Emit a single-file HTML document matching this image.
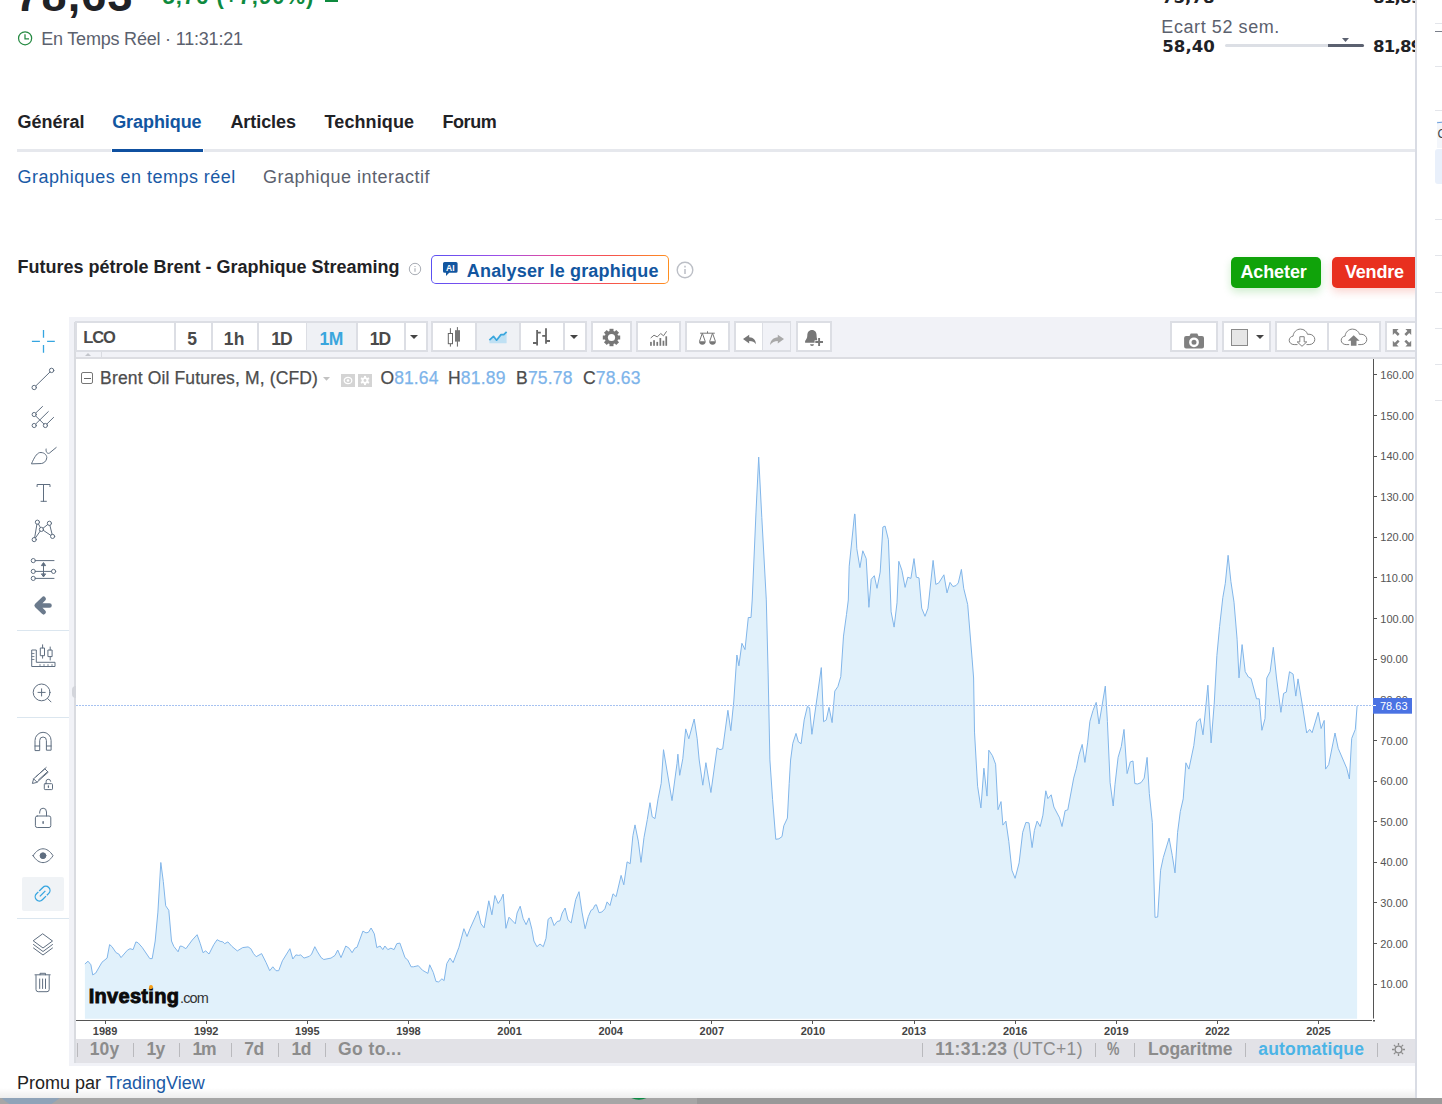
<!DOCTYPE html>
<html lang="fr">
<head>
<meta charset="utf-8">
<title>Futures pétrole Brent - Graphique Streaming</title>
<style>
html,body{margin:0;padding:0;overflow:hidden;}
body{width:1442px;height:1104px;overflow:hidden;background:#fff;position:relative;font-family:"Liberation Sans",Arial,sans-serif;color:#1f2226;}
.abs{position:absolute;white-space:nowrap;line-height:1;}
.lg{-webkit-text-stroke:0.25px currentColor;}
.t{position:absolute;white-space:nowrap;line-height:1;}
svg{position:absolute;overflow:visible;}
.yl{font:11px "Liberation Sans",sans-serif;fill:#555;}
.xl{font:bold 11px "Liberation Sans",sans-serif;fill:#444;}
.tb{position:absolute;top:322px;height:29px;box-sizing:border-box;border:1px solid #d9dbe0;background:#fff;}
.tb.act{background:#eff1f5;}
.tbt{position:absolute;white-space:nowrap;line-height:1;font-weight:bold;font-size:17.5px;color:#4a4a4a;}
.bb{position:absolute;white-space:nowrap;line-height:1;font-weight:bold;font-size:17.5px;color:#8c8c8c;}
.grp{position:absolute;top:321px;height:31px;box-sizing:border-box;border:2px solid #dcdee4;background:#fff;}
.dv{position:absolute;top:323px;height:27px;width:2px;background:#dcdee4;}
.act{position:absolute;top:323px;height:27px;background:#eff1f5;}
.sep{position:absolute;top:1043px;width:1px;height:14px;background:#b9b9bd;}
</style>
</head>
<body>

<!-- ===== top header (cropped) ===== -->
<div class="t" id="price" style="left:15.2px;top:-27px;font-size:45px;font-weight:bold;color:#1f2226;letter-spacing:1.2px;">78,63</div>
<div class="t" id="chg" style="left:162.5px;top:-13.8px;font-size:22px;font-weight:bold;color:#0e8a3e;letter-spacing:1px;">5,76 (+7,90%)</div>
<div class="abs" style="left:324.5px;top:0;width:13.5px;height:2px;background:#0e8a3e;"></div>
<svg style="left:17px;top:30px" width="17" height="17" viewBox="17 30 17 17"><circle cx="25.1" cy="38.3" r="6.55" fill="none" stroke="#258a42" stroke-width="1.25"/><path d="M25 34.300V38.800H29" fill="none" stroke="#258a42" stroke-width="1.25"/></svg>
<div class="t" id="rt" style="left:41.2px;top:29.8px;font-size:18px;color:#5b616e;letter-spacing:-0.2px;">En Temps Réel · 11:31:21</div>

<div class="t" id="v1" style="left:1162px;top:-10.2px;font-size:16.6px;font-weight:bold;letter-spacing:0px;font-family:'DejaVu Sans','Liberation Sans',sans-serif;">75,78</div>
<div class="t" id="v2" style="left:1373px;top:-10.2px;font-size:16.6px;font-weight:bold;letter-spacing:-0.8px;font-family:'DejaVu Sans','Liberation Sans',sans-serif;">81,89</div>
<div class="t" id="ec" style="left:1161.3px;top:17.9px;font-size:18px;color:#5b616e;letter-spacing:0.58px;">Ecart 52 sem.</div>
<div class="t" id="v3" style="left:1162.3px;top:39.3px;font-size:16.6px;font-weight:bold;letter-spacing:0px;font-family:'DejaVu Sans','Liberation Sans',sans-serif;">58,40</div>
<div class="t" id="v4" style="left:1373px;top:39.3px;font-size:16.6px;font-weight:bold;letter-spacing:-0.8px;font-family:'DejaVu Sans','Liberation Sans',sans-serif;">81,89</div>
<div class="abs" style="left:1225px;top:44px;width:139px;height:3px;background:#dcdfe5;border-radius:2px;"></div>
<div class="abs" style="left:1328px;top:44px;width:36px;height:3px;background:#5b6170;border-radius:0 2px 2px 0;"></div>
<svg style="left:1342px;top:38px" width="7" height="4" viewBox="0 0 7 4"><path d="M0 0h7L3.5 4z" fill="#5b6170"/></svg>

<!-- ===== tabs ===== -->
<div class="t tab" id="tab1" style="left:17.5px;top:113.1px;font-size:18px;font-weight:bold;letter-spacing:0px;">Général</div>
<div class="t tab" id="tab2" style="left:112.2px;top:113.1px;font-size:18px;font-weight:bold;color:#1256a0;letter-spacing:-0.08px;">Graphique</div>
<div class="t tab" id="tab3" style="left:230.4px;top:113.1px;font-size:18px;font-weight:bold;letter-spacing:-0.06px;">Articles</div>
<div class="t tab" id="tab4" style="left:324.5px;top:113.1px;font-size:18px;font-weight:bold;letter-spacing:0.11px;">Technique</div>
<div class="t tab" id="tab5" style="left:442.4px;top:113.1px;font-size:18px;font-weight:bold;letter-spacing:-0.4px;">Forum</div>
<div class="abs" style="left:17px;top:149px;width:1398px;height:3px;background:#e6e8ed;"></div>
<div class="abs" style="left:111px;top:149px;width:93px;height:3px;background:#fff;"></div><div class="abs" style="left:112px;top:149px;width:91px;height:3px;background:#0f50a0;"></div>

<div class="t" id="sub1" style="left:17.5px;top:167.8px;font-size:18px;color:#1a5aa6;letter-spacing:0.46px;">Graphiques en temps réel</div>
<div class="t" id="sub2" style="left:263.1px;top:167.8px;font-size:18px;color:#5b616e;letter-spacing:0.49px;">Graphique interactif</div>

<!-- ===== title row ===== -->
<div class="t" id="title" style="left:17.5px;top:257.8px;font-size:18px;font-weight:bold;">Futures pétrole Brent - Graphique Streaming</div>
<svg style="left:407.600px;top:261.900px" width="14" height="14" viewBox="0 0 14 14"><circle cx="7" cy="7" r="5.700" fill="none" stroke="#a9adb5" stroke-width="1"/><path d="M7 6.200v3.600M7 3.900v1.200" stroke="#a9adb5" stroke-width="1.100"/></svg>
<div class="abs" style="left:431px;top:255px;width:238px;height:29px;border-radius:5px;background:linear-gradient(90deg,#5a50f2 0%,#a04fe8 30%,#ee4a8c 55%,#f5524f 75%,#ff8f1f 100%);"></div>
<div class="abs" style="left:432.300px;top:256.300px;width:235.400px;height:26.400px;border-radius:3.800px;background:#fff;"></div>
<svg style="left:442.600px;top:262.300px" width="15" height="14" viewBox="0 0 15 14"><path d="M1.600 0h11.400a1.600 1.600 0 0 1 1.600 1.600v7.600a1.600 1.600 0 0 1-1.600 1.600H6.200L3 13.900V10.800H1.600A1.600 1.600 0 0 1 0 9.200V1.600A1.600 1.600 0 0 1 1.600 0z" fill="#1256a0"/><text x="7.300" y="8.600" text-anchor="middle" font-family="Liberation Sans,sans-serif" font-weight="bold" font-size="8.500" fill="#fff">AI</text></svg>
<div class="t" id="anal" style="left:466.8px;top:261.6px;font-size:18px;font-weight:bold;color:#1256a0;letter-spacing:0.18px;">Analyser le graphique</div>
<svg style="left:676px;top:260.500px" width="18" height="18" viewBox="0 0 18 18"><circle cx="9" cy="9" r="7.800" fill="none" stroke="#bcbfc6" stroke-width="1.400"/><path d="M9 8v5M9 4.800v1.600" stroke="#bcbfc6" stroke-width="1.500"/></svg>

<div class="abs" style="left:1231px;top:257px;width:90px;height:31px;border-radius:5px;background:#10a30a;box-shadow:0 4px 9px rgba(16,163,10,.2);"></div>
<div class="t" id="buy" style="left:1240.4px;top:262.9px;font-size:18px;font-weight:bold;color:#fff;letter-spacing:-0.1px;">Acheter</div>
<div class="abs" style="left:1332px;top:257px;width:100px;height:31px;border-radius:5px;background:#e8301f;box-shadow:0 4px 9px rgba(232,48,31,.2);"></div>
<div class="t" id="sell" style="left:1345px;top:262.9px;font-size:18px;font-weight:bold;color:#fff;letter-spacing:-0.2px;">Vendre</div>

<!-- ===== chart widget ===== -->
<div class="abs" id="wbg" style="left:69px;top:317px;width:1346px;height:749px;background:#f1f2f7;"></div>
<!-- chart white area -->
<div class="abs" style="left:75px;top:357px;width:1340px;height:683px;background:#fff;"></div>
<div class="abs" style="left:75px;top:356.500px;width:1340px;height:2px;background:#dcdde2;"></div>
<div class="abs" style="left:74px;top:322px;width:2px;height:741px;background:#d9dbe0;"></div>
<!-- bottom bar -->
<div class="abs" style="left:76px;top:1039px;width:1339px;height:23.5px;background:#e2e2e7;"></div>

<!-- top toolbar groups -->
<div class="grp" style="left:74.500px;width:353px;"></div>
<div class="dv" style="left:174px"></div><div class="dv" style="left:210.500px"></div><div class="dv" style="left:256.800px"></div><div class="dv" style="left:305.500px"></div><div class="dv" style="left:356px"></div><div class="dv" style="left:403.500px"></div>
<div class="act" style="left:307px;width:49px;"></div>
<div class="tbt" id="lco" style="left:83.3px;top:329px;font-size:16.5px;letter-spacing:-1.2px;">LCO</div>
<div class="tbt" id="b5" style="left:187.3px;top:330.7px;">5</div>
<div class="tbt" id="b1h" style="left:223.8px;top:330.7px;letter-spacing:0.2px;">1h</div>
<div class="tbt" id="b1d" style="left:271.2px;top:330.7px;letter-spacing:-0.8px;">1D</div>
<div class="tbt" id="b1m" style="left:319.5px;top:330.7px;color:#3aa6dd;letter-spacing:-0.5px;">1M</div>
<div class="tbt" id="b1d2" style="left:369.7px;top:330.7px;letter-spacing:-0.8px;">1D</div>
<svg style="left:410px;top:335px" width="8" height="4" viewBox="0 0 8 4"><path d="M0 0h8L4 4z" fill="#444"/></svg>
<!-- small strip below symbol input -->
<svg style="left:85px;top:352.500px" width="6" height="3" viewBox="0 0 6 3"><path d="M0 3h6L3 0z" fill="#c3c5cb"/></svg>
<div class="abs" style="left:100.500px;top:352px;width:1.500px;height:5px;background:#d9dbe1;"></div>

<div class="grp" style="left:431px;width:156px;"></div>
<div class="dv" style="left:475.300px"></div><div class="dv" style="left:519.200px"></div><div class="dv" style="left:563.200px"></div>
<div class="act" style="left:476.800px;width:42.400px;"></div>
<svg style="left:440px;top:322px" width="30" height="30" viewBox="440 322 30 30"><path d="M450.400 328.200V333.500M450.400 343.700V346.600M457.400 327.100V346.600" stroke="#666" stroke-width="1" fill="none"/><rect x="448.300" y="333.500" width="4.200" height="10.200" fill="#fff" stroke="#666" stroke-width="1"/><rect x="455" y="330.200" width="5" height="11.400" fill="#777"/></svg>
<svg style="left:485px;top:322px" width="30" height="30" viewBox="485 322 30 30"><path d="M489.400 340.200L493.500 336.300L496.600 340.200L501 334.600H503.800L506.600 331.900V343.300H489.400Z" fill="#bfe0f3"/><path d="M489.400 340.200L493.500 336.300L496.600 340.200L501 334.600H503.800L506.600 331.900" stroke="#3aa6dd" stroke-width="1.700" fill="none" stroke-linejoin="round"/></svg>
<svg style="left:528px;top:322px" width="30" height="30" viewBox="528 322 30 30"><path d="M537.100 330V345.500M533 343H537.100M537.100 332.700H540.800M546 328.200V343.800M542.200 335.800H546M546 341H550" stroke="#666" stroke-width="1.800" fill="none"/></svg>
<svg style="left:570px;top:335px" width="8" height="4" viewBox="0 0 8 4"><path d="M0 0h8L4 4z" fill="#444"/></svg>

<div class="grp" style="left:591px;width:41px;"></div>
<svg style="left:601px;top:327px" width="21" height="21" viewBox="-10.500 -10.500 21 21"><g fill="#777"><circle r="6.800"/><g id="teeth"><rect x="-2" y="-8.700" width="4" height="17.400"/><rect x="-2" y="-8.700" width="4" height="17.400" transform="rotate(45)"/><rect x="-2" y="-8.700" width="4" height="17.400" transform="rotate(90)"/><rect x="-2" y="-8.700" width="4" height="17.400" transform="rotate(135)"/></g></g><circle r="3.600" fill="#fff"/></svg>

<div class="grp" style="left:636px;width:45px;"></div>
<svg style="left:645px;top:322px" width="30" height="30" viewBox="645 322 30 30"><g fill="#777"><rect x="650.100" y="341.900" width="1.700" height="3.900"/><rect x="653.200" y="340.200" width="1.700" height="5.600"/><rect x="656.400" y="341.900" width="1.700" height="3.900"/><rect x="659.500" y="338" width="1.700" height="7.800"/><rect x="662.600" y="340.700" width="1.700" height="5.100"/><rect x="665.400" y="336.300" width="1.700" height="9.500"/></g><path d="M650.700 338L654 335.200L657.300 336.900L660.700 333.500L663.500 335.800L666.600 331.300" stroke="#777" stroke-width="1" fill="none"/></svg>

<div class="grp" style="left:685.300px;width:44.500px;"></div>
<svg style="left:695px;top:322px" width="30" height="30" viewBox="695 322 30 30"><path d="M700.100 333.200H714.800M707.500 331.300V333.200M702.300 333.200L699.500 341.300M702.300 333.200L705.200 341.300M712.500 333.200L709.700 341.300M712.500 333.200L715.400 341.300" stroke="#777" stroke-width="1" fill="none"/><path d="M699 341.300h6.700a3.350 3.400 0 0 1-6.700 0zM709.200 341.300h6.700a3.350 3.400 0 0 1-6.700 0z" fill="#777"/></svg>

<div class="grp" style="left:734px;width:57px;"></div>
<div class="dv" style="left:761.500px"></div>
<div class="act" style="left:763px;width:26.500px;background:#f1f2f7;"></div>
<svg style="left:740px;top:330px" width="20" height="18" viewBox="740 330 20 18"><path d="M743 339.100L749.200 334.700V337.300C753.500 337.500 755.800 340 755.900 344.200C754.500 341.800 752.500 341 749.200 341V343.500Z" fill="#777"/></svg>
<svg style="left:768px;top:330px" width="20" height="18" viewBox="768 330 20 18"><path d="M784 339.100L777.800 334.700V337.300C773.500 337.500 770.400 340.400 770.100 345C772 342.200 774.500 341 777.800 341V343.500Z" fill="#a9a9a9"/></svg>

<div class="grp" style="left:796.200px;width:35.800px;"></div>
<svg style="left:803px;top:326px" width="24" height="24" viewBox="803 326 24 24"><path d="M812 330c3 0 4.600 2.300 4.600 5.500 0 2.500 .5 4 1.500 5.400v1.900h-13v-1.900c1.200-1.400 2.200-2.900 2.200-5.400 0-3.200 1.700-5.500 4.700-5.500z" fill="#777"/><path d="M810 344.300h4a2 1.600 0 0 1-4 0z" fill="#777"/><path d="M819.100 337.400v9.200M814.600 342h9" stroke="#fff" stroke-width="3.600"/><path d="M819.100 338.100v7.800M815.300 342h7.700" stroke="#777" stroke-width="1.900"/></svg>

<!-- right toolbar -->
<div class="grp" style="left:1170.200px;width:47.600px;"></div>
<svg style="left:1182px;top:330px" width="24" height="20" viewBox="1182 330 24 20"><path d="M1186.100 335.900h3.400l1.200-2.300h6.600l1.200 2.300h3.500a2 2 0 0 1 2 2v8.700a2 2 0 0 1-2 2h-15.900a2 2 0 0 1-2-2v-8.700a2 2 0 0 1 2-2z" fill="#808080"/><circle cx="1194" cy="342.300" r="3.700" fill="none" stroke="#fff" stroke-width="2.400"/></svg>
<div class="grp" style="left:1222.200px;width:48.600px;"></div>
<div class="abs" style="left:1231.200px;top:329.100px;width:16.600px;height:16.800px;box-sizing:border-box;border:1px solid #8a8a8a;background:#e6e6e6;"></div>
<svg style="left:1256.300px;top:335px" width="8" height="4" viewBox="0 0 8 4"><path d="M0 0h8L4 4z" fill="#444"/></svg>
<div class="grp" style="left:1275.200px;width:105.600px;"></div>
<div class="dv" style="left:1327.200px"></div>
<svg style="left:1286px;top:326px" width="32" height="24" viewBox="1286 326 32 24"><path d="M1297.500 344.600h-3.300c-2.900 0-5-1.900-5-4.300 0-2.200 1.700-3.900 3.900-4.200 .3-3.800 3.400-7 7.400-7 3.400 0 6.200 2.200 7.100 5.300 .5-.1 .9-.2 1.400-.2 3.200 0 5.800 2.300 5.800 5.200s-2.400 5.200-5.600 5.200h-2.700" fill="none" stroke="#808080" stroke-width="1"/><path d="M1299.800 336.700h4.400v5.200h2.600l-4.800 4.400-4.800-4.400h2.600z" fill="#fff" stroke="#808080" stroke-width="1" stroke-linejoin="round"/></svg>
<svg style="left:1338px;top:326px" width="32" height="24" viewBox="1338 326 32 24"><path d="M1349.200 344.600h-3c-2.900 0-5-1.900-5-4.300 0-2.200 1.700-3.900 3.900-4.200 .3-3.800 3.400-7 7.400-7 3.400 0 6.200 2.200 7.100 5.300 .5-.1 .9-.2 1.400-.2 3.200 0 5.800 2.300 5.800 5.200s-2.400 5.200-5.600 5.200h-3" fill="none" stroke="#808080" stroke-width="1"/><path d="M1353.700 335.200l5.900 5.600h-3.100v4.900h-5.600v-4.900h-3.100z" fill="#808080"/></svg>
<div class="grp" style="left:1385.300px;width:40px;"></div>
<svg style="left:1392px;top:328px" width="20" height="20" viewBox="1392 328 20 20"><g fill="#808080"><path d="M1392.800 329.100h5.800l-2 2 3 3-1.800 1.800-3-3-2 2z"/><path d="M1411.200 329.100v5.800l-2-2-3 3-1.800-1.800 3-3-2-2z"/><path d="M1392.800 346.600v-5.800l2 2 3-3 1.800 1.800-3 3 2 2z"/><path d="M1411.200 346.600h-5.800l2-2-3-3 1.800-1.800 3 3 2-2z"/></g></svg>


<!-- legend -->
<div class="abs" style="left:81.300px;top:371.600px;width:12px;height:12px;box-sizing:border-box;border:1px solid #777;border-radius:2px;background:#fff;"></div>
<div class="abs" style="left:84px;top:377.5px;width:6.6px;height:1px;background:#666;"></div>
<div class="t lg" id="lgname" style="left:100.1px;top:370.2px;font-size:17.500px;color:#4d4d4d;letter-spacing:0.15px;">Brent Oil Futures, M, (CFD)</div>
<svg style="left:323px;top:377px" width="7" height="4" viewBox="0 0 7 4"><path d="M0 0h7L3.500 3.800z" fill="#c2c2c2"/></svg>
<div class="abs" style="left:341px;top:374px;width:14px;height:13px;background:#d4d4d4;"></div>
<div class="abs" style="left:358px;top:374px;width:14px;height:13px;background:#d4d4d4;"></div>
<svg style="left:341px;top:374px" width="14" height="13" viewBox="0 0 14 13"><ellipse cx="7" cy="6.500" rx="3.800" ry="3.200" fill="none" stroke="#fff" stroke-width="1.200"/><circle cx="7" cy="6.500" r="1.300" fill="#fff"/></svg>
<svg style="left:358px;top:374px" width="14" height="13" viewBox="-7 -6.500 14 13"><g fill="#fff"><circle r="3.300"/><rect x="-1" y="-4.600" width="2" height="9.200"/><rect x="-1" y="-4.600" width="2" height="9.200" transform="rotate(60)"/><rect x="-1" y="-4.600" width="2" height="9.200" transform="rotate(120)"/></g><circle r="1.400" fill="#d4d4d4"/></svg>
<div class="t lg" id="lgO" style="left:380.4px;top:370.2px;font-size:17.500px;color:#4d4d4d;letter-spacing:0.12px;">O<span style="color:#7db4ea">81.64</span></div>
<div class="t lg" id="lgH" style="left:448px;top:370.2px;font-size:17.500px;color:#4d4d4d;letter-spacing:0.2px;">H<span style="color:#7db4ea">81.89</span></div>
<div class="t lg" id="lgB" style="left:516px;top:370.2px;font-size:17.500px;color:#4d4d4d;letter-spacing:0.2px;">B<span style="color:#7db4ea">75.78</span></div>
<div class="t lg" id="lgC" style="left:583px;top:370.2px;font-size:17.500px;color:#4d4d4d;letter-spacing:0.2px;">C<span style="color:#7db4ea">78.63</span></div>


<!-- chart svg -->
<svg id="chart" style="left:0;top:0" width="1442" height="1104" viewBox="0 0 1442 1104">
<path d="M84.9,1018.7 L84.9,964.0 L88.0,961.2 L90.9,964.8 L92.7,974.9 L95.7,973.1 L102.0,962.2 L107.1,958.1 L109.6,944.6 L112.0,946.7 L116.1,952.7 L118.8,954.0 L121.0,957.6 L127.3,950.3 L130.0,948.7 L133.1,949.6 L135.9,941.9 L138.1,942.8 L142.1,947.3 L149.8,958.6 L152.2,958.6 L155.2,941.0 L157.9,912.1 L160.8,862.5 L163.3,881.5 L165.7,905.8 L168.8,910.3 L171.5,941.0 L173.8,946.4 L178.1,951.8 L180.1,946.0 L182.3,946.4 L185.9,948.7 L192.2,940.1 L197.1,934.7 L200.3,943.7 L203.0,952.7 L205.7,950.9 L209.0,954.0 L213.8,944.6 L217.1,939.7 L220.1,941.3 L222.9,941.9 L224.7,943.7 L227.9,941.9 L231.9,946.4 L237.3,950.9 L242.7,947.6 L248.1,946.9 L250.8,948.7 L253.5,953.6 L256.2,956.7 L261.6,953.6 L266.1,962.6 L269.7,970.7 L272.8,966.8 L276.0,970.7 L278.7,970.7 L282.4,960.8 L289.9,948.7 L292.8,959.0 L295.9,954.9 L298.6,955.4 L300.7,954.9 L304.0,958.1 L309.4,956.3 L311.6,954.1 L314.8,946.7 L317.5,951.8 L321.1,957.6 L323.8,959.5 L331.0,958.1 L335.0,955.4 L337.7,950.0 L341.0,957.6 L345.8,946.0 L349.1,948.2 L352.1,952.7 L354.8,948.2 L357.0,947.3 L362.9,931.1 L366.0,932.9 L368.4,932.3 L371.1,928.0 L374.3,933.8 L376.8,947.6 L380.1,946.0 L382.8,949.6 L384.9,946.0 L387.8,949.6 L390.9,948.2 L394.1,949.6 L396.8,943.7 L399.9,943.1 L405.0,957.7 L407.7,959.9 L411.1,966.8 L413.4,966.8 L418.3,965.7 L422.4,970.2 L427.9,973.4 L429.7,964.8 L433.3,972.5 L436.0,981.5 L438.7,981.9 L441.9,978.8 L444.1,980.6 L446.8,963.5 L450.0,958.1 L453.1,962.6 L458.9,947.3 L463.9,928.7 L467.0,936.5 L470.2,928.3 L478.0,910.9 L481.0,923.8 L484.1,927.8 L488.8,900.8 L491.9,914.8 L494.9,895.5 L498.2,903.5 L500.9,899.5 L503.2,894.1 L505.9,928.3 L509.0,917.2 L515.3,923.8 L517.1,913.0 L520.2,906.2 L523.1,918.4 L526.1,924.7 L529.0,917.9 L531.9,929.3 L533.9,941.0 L536.9,946.7 L540.0,944.0 L543.3,946.7 L546.0,938.3 L548.1,919.3 L551.0,917.0 L554.1,925.6 L557.1,921.5 L560.0,920.8 L562.2,913.0 L565.1,908.0 L568.0,919.9 L571.2,922.9 L575.7,899.5 L579.0,891.7 L582.0,912.1 L585.1,928.7 L588.3,916.6 L591.0,910.3 L592.8,909.4 L595.0,905.1 L596.4,904.8 L599.0,912.7 L601.9,912.0 L604.9,908.8 L607.1,901.9 L610.0,905.5 L613.0,893.8 L616.1,896.7 L621.1,875.4 L623.8,884.8 L627.1,861.9 L630.2,863.7 L632.9,835.7 L635.0,824.9 L638.3,841.1 L641.0,862.4 L644.0,837.5 L647.3,819.5 L650.0,802.7 L652.2,816.8 L655.0,818.6 L658.1,798.8 L661.2,783.4 L663.5,749.7 L672.0,800.6 L677.0,763.6 L677.9,754.2 L679.7,775.3 L682.8,758.7 L685.7,728.9 L688.8,738.8 L694.2,719.0 L697.2,738.8 L699.2,760.0 L702.8,785.2 L705.9,762.7 L710.9,792.5 L715.4,760.0 L717.1,747.9 L720.0,749.7 L722.7,748.8 L727.9,710.3 L730.8,730.7 L733.8,701.0 L736.9,655.0 L738.9,665.8 L741.9,643.3 L745.0,649.6 L748.3,617.5 L751.0,617.5 L752.2,600.0 L756.0,512.1 L758.7,457.1 L761.8,517.5 L766.3,599.9 L768.1,672.1 L769.9,759.9 L772.6,799.7 L775.8,839.3 L778.9,838.8 L782.0,836.6 L783.8,825.8 L787.4,818.1 L789.2,783.4 L790.6,760.0 L792.8,743.3 L796.0,733.4 L798.4,741.9 L801.1,743.7 L804.2,719.9 L807.4,706.4 L809.6,707.8 L811.9,734.3 L821.3,667.6 L823.6,721.7 L826.3,719.9 L829.0,707.3 L832.1,722.6 L834.8,691.1 L837.9,686.5 L840.8,676.6 L843.5,636.1 L846.5,614.4 L848.3,600.0 L849.2,566.2 L854.6,513.9 L855.0,514.4 L856.8,548.7 L859.9,567.6 L862.8,550.8 L866.2,558.6 L868.9,607.3 L871.2,579.3 L874.3,575.7 L877.0,588.3 L880.2,572.1 L882.9,527.0 L885.1,526.1 L888.4,539.7 L891.1,611.8 L894.1,627.1 L897.0,602.8 L898.8,561.3 L901.9,570.3 L905.1,587.4 L907.8,577.2 L910.9,578.4 L914.0,558.6 L916.3,577.2 L919.0,577.9 L921.7,608.2 L925.0,616.3 L928.0,608.2 L933.1,560.4 L935.8,584.4 L938.8,582.9 L943.9,574.8 L947.0,592.9 L950.0,582.4 L952.9,586.5 L956.0,585.6 L958.3,582.9 L961.4,569.4 L963.7,588.3 L967.7,604.6 L972.2,659.9 L973.6,678.0 L974.5,732.1 L977.6,786.2 L980.9,807.9 L983.9,768.2 L987.0,796.1 L988.8,750.2 L992.4,755.6 L995.6,764.2 L998.0,809.7 L1001.0,801.6 L1002.9,825.1 L1005.9,821.1 L1008.8,841.3 L1011.9,870.2 L1015.1,878.3 L1019.1,862.9 L1022.7,832.3 L1025.9,822.4 L1029.0,822.9 L1032.1,847.6 L1034.4,830.5 L1037.1,821.1 L1040.2,826.5 L1042.9,815.2 L1045.8,790.8 L1047.9,798.6 L1051.2,794.8 L1053.9,807.0 L1059.6,817.9 L1062.0,826.5 L1065.1,810.7 L1067.8,809.8 L1073.7,778.1 L1076.4,768.2 L1079.1,754.7 L1082.2,744.4 L1084.9,762.4 L1087.6,742.9 L1089.9,721.3 L1093.0,710.5 L1096.2,702.4 L1099.0,724.0 L1105.3,686.1 L1107.4,721.3 L1110.1,782.6 L1113.2,806.0 L1115.0,784.4 L1118.1,757.4 L1121.3,746.5 L1124.0,729.4 L1127.1,773.6 L1130.3,761.9 L1133.0,761.0 L1134.8,783.5 L1137.5,784.0 L1141.1,782.6 L1144.2,778.1 L1147.1,757.4 L1149.3,793.4 L1152.3,822.4 L1155.0,917.4 L1157.7,917.0 L1160.6,870.2 L1163.3,857.5 L1169.1,838.1 L1172.3,855.7 L1175.0,872.9 L1177.6,832.3 L1180.3,811.6 L1183.2,798.9 L1185.9,762.8 L1188.9,769.1 L1193.8,745.6 L1196.7,722.2 L1200.1,718.6 L1203.0,734.8 L1207.9,685.2 L1211.1,742.9 L1214.2,704.2 L1216.9,655.4 L1219.6,626.5 L1222.8,597.7 L1225.3,583.3 L1228.1,555.3 L1230.9,581.5 L1234.0,602.2 L1237.1,639.2 L1239.0,677.9 L1242.1,644.6 L1245.2,671.6 L1248.4,677.0 L1251.1,678.5 L1256.5,698.8 L1259.2,698.8 L1261.9,730.3 L1265.0,718.6 L1266.8,678.0 L1270.1,671.7 L1273.3,647.3 L1276.4,677.0 L1280.9,712.3 L1283.6,693.4 L1286.3,692.1 L1289.5,671.7 L1293.1,674.1 L1295.8,696.1 L1298.0,678.9 L1302.5,706.0 L1306.7,733.0 L1309.7,729.4 L1312.1,732.7 L1318.2,712.3 L1321.1,728.5 L1324.2,720.4 L1325.6,769.1 L1328.7,764.6 L1335.0,733.0 L1338.2,748.3 L1346.7,768.2 L1349.4,779.0 L1351.7,738.4 L1355.3,729.4 L1357.1,706.0 L1357.1,1018.7 Z" fill="#e1f1fb" stroke="none"/>
<path d="M84.9,964.0 L88.0,961.2 L90.9,964.8 L92.7,974.9 L95.7,973.1 L102.0,962.2 L107.1,958.1 L109.6,944.6 L112.0,946.7 L116.1,952.7 L118.8,954.0 L121.0,957.6 L127.3,950.3 L130.0,948.7 L133.1,949.6 L135.9,941.9 L138.1,942.8 L142.1,947.3 L149.8,958.6 L152.2,958.6 L155.2,941.0 L157.9,912.1 L160.8,862.5 L163.3,881.5 L165.7,905.8 L168.8,910.3 L171.5,941.0 L173.8,946.4 L178.1,951.8 L180.1,946.0 L182.3,946.4 L185.9,948.7 L192.2,940.1 L197.1,934.7 L200.3,943.7 L203.0,952.7 L205.7,950.9 L209.0,954.0 L213.8,944.6 L217.1,939.7 L220.1,941.3 L222.9,941.9 L224.7,943.7 L227.9,941.9 L231.9,946.4 L237.3,950.9 L242.7,947.6 L248.1,946.9 L250.8,948.7 L253.5,953.6 L256.2,956.7 L261.6,953.6 L266.1,962.6 L269.7,970.7 L272.8,966.8 L276.0,970.7 L278.7,970.7 L282.4,960.8 L289.9,948.7 L292.8,959.0 L295.9,954.9 L298.6,955.4 L300.7,954.9 L304.0,958.1 L309.4,956.3 L311.6,954.1 L314.8,946.7 L317.5,951.8 L321.1,957.6 L323.8,959.5 L331.0,958.1 L335.0,955.4 L337.7,950.0 L341.0,957.6 L345.8,946.0 L349.1,948.2 L352.1,952.7 L354.8,948.2 L357.0,947.3 L362.9,931.1 L366.0,932.9 L368.4,932.3 L371.1,928.0 L374.3,933.8 L376.8,947.6 L380.1,946.0 L382.8,949.6 L384.9,946.0 L387.8,949.6 L390.9,948.2 L394.1,949.6 L396.8,943.7 L399.9,943.1 L405.0,957.7 L407.7,959.9 L411.1,966.8 L413.4,966.8 L418.3,965.7 L422.4,970.2 L427.9,973.4 L429.7,964.8 L433.3,972.5 L436.0,981.5 L438.7,981.9 L441.9,978.8 L444.1,980.6 L446.8,963.5 L450.0,958.1 L453.1,962.6 L458.9,947.3 L463.9,928.7 L467.0,936.5 L470.2,928.3 L478.0,910.9 L481.0,923.8 L484.1,927.8 L488.8,900.8 L491.9,914.8 L494.9,895.5 L498.2,903.5 L500.9,899.5 L503.2,894.1 L505.9,928.3 L509.0,917.2 L515.3,923.8 L517.1,913.0 L520.2,906.2 L523.1,918.4 L526.1,924.7 L529.0,917.9 L531.9,929.3 L533.9,941.0 L536.9,946.7 L540.0,944.0 L543.3,946.7 L546.0,938.3 L548.1,919.3 L551.0,917.0 L554.1,925.6 L557.1,921.5 L560.0,920.8 L562.2,913.0 L565.1,908.0 L568.0,919.9 L571.2,922.9 L575.7,899.5 L579.0,891.7 L582.0,912.1 L585.1,928.7 L588.3,916.6 L591.0,910.3 L592.8,909.4 L595.0,905.1 L596.4,904.8 L599.0,912.7 L601.9,912.0 L604.9,908.8 L607.1,901.9 L610.0,905.5 L613.0,893.8 L616.1,896.7 L621.1,875.4 L623.8,884.8 L627.1,861.9 L630.2,863.7 L632.9,835.7 L635.0,824.9 L638.3,841.1 L641.0,862.4 L644.0,837.5 L647.3,819.5 L650.0,802.7 L652.2,816.8 L655.0,818.6 L658.1,798.8 L661.2,783.4 L663.5,749.7 L672.0,800.6 L677.0,763.6 L677.9,754.2 L679.7,775.3 L682.8,758.7 L685.7,728.9 L688.8,738.8 L694.2,719.0 L697.2,738.8 L699.2,760.0 L702.8,785.2 L705.9,762.7 L710.9,792.5 L715.4,760.0 L717.1,747.9 L720.0,749.7 L722.7,748.8 L727.9,710.3 L730.8,730.7 L733.8,701.0 L736.9,655.0 L738.9,665.8 L741.9,643.3 L745.0,649.6 L748.3,617.5 L751.0,617.5 L752.2,600.0 L756.0,512.1 L758.7,457.1 L761.8,517.5 L766.3,599.9 L768.1,672.1 L769.9,759.9 L772.6,799.7 L775.8,839.3 L778.9,838.8 L782.0,836.6 L783.8,825.8 L787.4,818.1 L789.2,783.4 L790.6,760.0 L792.8,743.3 L796.0,733.4 L798.4,741.9 L801.1,743.7 L804.2,719.9 L807.4,706.4 L809.6,707.8 L811.9,734.3 L821.3,667.6 L823.6,721.7 L826.3,719.9 L829.0,707.3 L832.1,722.6 L834.8,691.1 L837.9,686.5 L840.8,676.6 L843.5,636.1 L846.5,614.4 L848.3,600.0 L849.2,566.2 L854.6,513.9 L855.0,514.4 L856.8,548.7 L859.9,567.6 L862.8,550.8 L866.2,558.6 L868.9,607.3 L871.2,579.3 L874.3,575.7 L877.0,588.3 L880.2,572.1 L882.9,527.0 L885.1,526.1 L888.4,539.7 L891.1,611.8 L894.1,627.1 L897.0,602.8 L898.8,561.3 L901.9,570.3 L905.1,587.4 L907.8,577.2 L910.9,578.4 L914.0,558.6 L916.3,577.2 L919.0,577.9 L921.7,608.2 L925.0,616.3 L928.0,608.2 L933.1,560.4 L935.8,584.4 L938.8,582.9 L943.9,574.8 L947.0,592.9 L950.0,582.4 L952.9,586.5 L956.0,585.6 L958.3,582.9 L961.4,569.4 L963.7,588.3 L967.7,604.6 L972.2,659.9 L973.6,678.0 L974.5,732.1 L977.6,786.2 L980.9,807.9 L983.9,768.2 L987.0,796.1 L988.8,750.2 L992.4,755.6 L995.6,764.2 L998.0,809.7 L1001.0,801.6 L1002.9,825.1 L1005.9,821.1 L1008.8,841.3 L1011.9,870.2 L1015.1,878.3 L1019.1,862.9 L1022.7,832.3 L1025.9,822.4 L1029.0,822.9 L1032.1,847.6 L1034.4,830.5 L1037.1,821.1 L1040.2,826.5 L1042.9,815.2 L1045.8,790.8 L1047.9,798.6 L1051.2,794.8 L1053.9,807.0 L1059.6,817.9 L1062.0,826.5 L1065.1,810.7 L1067.8,809.8 L1073.7,778.1 L1076.4,768.2 L1079.1,754.7 L1082.2,744.4 L1084.9,762.4 L1087.6,742.9 L1089.9,721.3 L1093.0,710.5 L1096.2,702.4 L1099.0,724.0 L1105.3,686.1 L1107.4,721.3 L1110.1,782.6 L1113.2,806.0 L1115.0,784.4 L1118.1,757.4 L1121.3,746.5 L1124.0,729.4 L1127.1,773.6 L1130.3,761.9 L1133.0,761.0 L1134.8,783.5 L1137.5,784.0 L1141.1,782.6 L1144.2,778.1 L1147.1,757.4 L1149.3,793.4 L1152.3,822.4 L1155.0,917.4 L1157.7,917.0 L1160.6,870.2 L1163.3,857.5 L1169.1,838.1 L1172.3,855.7 L1175.0,872.9 L1177.6,832.3 L1180.3,811.6 L1183.2,798.9 L1185.9,762.8 L1188.9,769.1 L1193.8,745.6 L1196.7,722.2 L1200.1,718.6 L1203.0,734.8 L1207.9,685.2 L1211.1,742.9 L1214.2,704.2 L1216.9,655.4 L1219.6,626.5 L1222.8,597.7 L1225.3,583.3 L1228.1,555.3 L1230.9,581.5 L1234.0,602.2 L1237.1,639.2 L1239.0,677.9 L1242.1,644.6 L1245.2,671.6 L1248.4,677.0 L1251.1,678.5 L1256.5,698.8 L1259.2,698.8 L1261.9,730.3 L1265.0,718.6 L1266.8,678.0 L1270.1,671.7 L1273.3,647.3 L1276.4,677.0 L1280.9,712.3 L1283.6,693.4 L1286.3,692.1 L1289.5,671.7 L1293.1,674.1 L1295.8,696.1 L1298.0,678.9 L1302.5,706.0 L1306.7,733.0 L1309.7,729.4 L1312.1,732.7 L1318.2,712.3 L1321.1,728.5 L1324.2,720.4 L1325.6,769.1 L1328.7,764.6 L1335.0,733.0 L1338.2,748.3 L1346.7,768.2 L1349.4,779.0 L1351.7,738.4 L1355.3,729.4 L1357.1,706.0" fill="none" stroke="#82b6ea" stroke-width="1" stroke-linejoin="round"/>
<line x1="76" x2="1373" y1="705.500" y2="705.500" stroke="#a6c2f1" stroke-width="1" stroke-dasharray="2 1"/>
<line x1="1373.500" x2="1373.500" y1="359" y2="1018.500" stroke="#555" stroke-width="1"/>
<line x1="76" x2="1372" y1="1020.500" y2="1020.500" stroke="#555" stroke-width="1"/><path d="M1373 1020h2v1.500h-2z" fill="#555"/>
<line x1="1374" x2="1377" y1="984.5" y2="984.5" stroke="#555" stroke-width="1"/><text x="1380.3" y="988.2" class="yl">10.00</text><line x1="1374" x2="1377" y1="943.5" y2="943.5" stroke="#555" stroke-width="1"/><text x="1380.3" y="947.5" class="yl">20.00</text><line x1="1374" x2="1377" y1="902.5" y2="902.5" stroke="#555" stroke-width="1"/><text x="1380.3" y="906.9" class="yl">30.00</text><line x1="1374" x2="1377" y1="862.5" y2="862.5" stroke="#555" stroke-width="1"/><text x="1380.3" y="866.3" class="yl">40.00</text><line x1="1374" x2="1377" y1="821.5" y2="821.5" stroke="#555" stroke-width="1"/><text x="1380.3" y="825.7" class="yl">50.00</text><line x1="1374" x2="1377" y1="781.5" y2="781.5" stroke="#555" stroke-width="1"/><text x="1380.3" y="785.1" class="yl">60.00</text><line x1="1374" x2="1377" y1="740.5" y2="740.5" stroke="#555" stroke-width="1"/><text x="1380.3" y="744.5" class="yl">70.00</text><line x1="1374" x2="1377" y1="699.5" y2="699.5" stroke="#555" stroke-width="1"/><text x="1380.3" y="703.9" class="yl">80.00</text><line x1="1374" x2="1377" y1="659.5" y2="659.5" stroke="#555" stroke-width="1"/><text x="1380.3" y="663.3" class="yl">90.00</text><line x1="1374" x2="1377" y1="618.5" y2="618.5" stroke="#555" stroke-width="1"/><text x="1380.3" y="622.7" class="yl">100.00</text><line x1="1374" x2="1377" y1="577.5" y2="577.5" stroke="#555" stroke-width="1"/><text x="1380.3" y="582.1" class="yl">110.00</text><line x1="1374" x2="1377" y1="537.5" y2="537.5" stroke="#555" stroke-width="1"/><text x="1380.3" y="541.4" class="yl">120.00</text><line x1="1374" x2="1377" y1="496.5" y2="496.5" stroke="#555" stroke-width="1"/><text x="1380.3" y="500.8" class="yl">130.00</text><line x1="1374" x2="1377" y1="456.5" y2="456.5" stroke="#555" stroke-width="1"/><text x="1380.3" y="460.2" class="yl">140.00</text><line x1="1374" x2="1377" y1="415.5" y2="415.5" stroke="#555" stroke-width="1"/><text x="1380.3" y="419.6" class="yl">150.00</text><line x1="1374" x2="1377" y1="374.5" y2="374.5" stroke="#555" stroke-width="1"/><text x="1380.3" y="379.0" class="yl">160.00</text>
<line x1="105.5" x2="105.5" y1="1021" y2="1024" stroke="#555" stroke-width="1"/><text x="105.1" y="1035" text-anchor="middle" class="xl">1989</text><line x1="206.5" x2="206.5" y1="1021" y2="1024" stroke="#555" stroke-width="1"/><text x="206.2" y="1035" text-anchor="middle" class="xl">1992</text><line x1="307.5" x2="307.5" y1="1021" y2="1024" stroke="#555" stroke-width="1"/><text x="307.3" y="1035" text-anchor="middle" class="xl">1995</text><line x1="408.5" x2="408.5" y1="1021" y2="1024" stroke="#555" stroke-width="1"/><text x="408.5" y="1035" text-anchor="middle" class="xl">1998</text><line x1="509.5" x2="509.5" y1="1021" y2="1024" stroke="#555" stroke-width="1"/><text x="509.6" y="1035" text-anchor="middle" class="xl">2001</text><line x1="610.5" x2="610.5" y1="1021" y2="1024" stroke="#555" stroke-width="1"/><text x="610.7" y="1035" text-anchor="middle" class="xl">2004</text><line x1="711.5" x2="711.5" y1="1021" y2="1024" stroke="#555" stroke-width="1"/><text x="711.8" y="1035" text-anchor="middle" class="xl">2007</text><line x1="812.5" x2="812.5" y1="1021" y2="1024" stroke="#555" stroke-width="1"/><text x="812.9" y="1035" text-anchor="middle" class="xl">2010</text><line x1="914.5" x2="914.5" y1="1021" y2="1024" stroke="#555" stroke-width="1"/><text x="914.0" y="1035" text-anchor="middle" class="xl">2013</text><line x1="1015.5" x2="1015.5" y1="1021" y2="1024" stroke="#555" stroke-width="1"/><text x="1015.2" y="1035" text-anchor="middle" class="xl">2016</text><line x1="1116.5" x2="1116.5" y1="1021" y2="1024" stroke="#555" stroke-width="1"/><text x="1116.3" y="1035" text-anchor="middle" class="xl">2019</text><line x1="1217.5" x2="1217.5" y1="1021" y2="1024" stroke="#555" stroke-width="1"/><text x="1217.4" y="1035" text-anchor="middle" class="xl">2022</text><line x1="1318.5" x2="1318.5" y1="1021" y2="1024" stroke="#555" stroke-width="1"/><text x="1318.5" y="1035" text-anchor="middle" class="xl">2025</text>
<rect x="1373" y="698" width="39" height="15.700" fill="#4a72e3"/><rect x="1373" y="705" width="3" height="1" fill="#fff"/>
<text x="1380" y="710" font-family="Liberation Sans,sans-serif" font-size="11" fill="#fff">78.63</text>
</svg>

<!-- watermark logo -->
<div class="t" id="logo1" style="left:88.7px;top:985.8px;font-size:20px;font-weight:bold;color:#0b0b0b;letter-spacing:0.3px;-webkit-text-stroke:0.9px #0b0b0b;">Investing</div>
<div class="t" id="logo2" style="left:180px;top:990.6px;font-size:14.5px;color:#333;letter-spacing:-0.9px;">.com</div>
<div class="abs" style="left:148.500px;top:984.8px;width:4px;height:4px;border-radius:50% 50% 50% 0;background:#f6a01a;transform:rotate(-10deg);"></div>


<!-- bottom bar -->
<div class="sep" style="left:76.500px"></div><div class="sep" style="left:132.500px"></div><div class="sep" style="left:178.500px"></div><div class="sep" style="left:230.500px"></div><div class="sep" style="left:277.700px"></div><div class="sep" style="left:325px"></div>
<div class="bb" id="bb10y" style="left:89.7px;top:1040.6px;letter-spacing:0.2px;">10y</div>
<div class="bb" id="bb1y" style="left:146.6px;top:1040.6px;letter-spacing:-0.8px;">1y</div>
<div class="bb" id="bb1m" style="left:192.6px;top:1040.6px;letter-spacing:-1.3px;">1m</div>
<div class="bb" id="bb7d" style="left:244.3px;top:1040.6px;letter-spacing:-0.5px;">7d</div>
<div class="bb" id="bb1d" style="left:291.6px;top:1040.6px;letter-spacing:-0.6px;">1d</div>
<div class="bb" id="bbgo" style="left:338px;top:1040.6px;letter-spacing:0.43px;">Go to...</div>
<div class="sep" style="left:921.500px"></div><div class="sep" style="left:1095px"></div><div class="sep" style="left:1134px"></div><div class="sep" style="left:1244.500px"></div><div class="sep" style="left:1377px"></div>
<div class="bb" id="bbtime" style="left:935.3px;top:1040.6px;letter-spacing:0.38px;">11:31:23 <span style="font-weight:normal">(UTC+1)</span></div>
<div class="bb" id="bbpct" style="left:1107px;top:1040.6px;transform:scaleX(.8);transform-origin:left;">%</div>
<div class="bb" id="bblog" style="left:1148px;top:1040.6px;">Logaritme</div>
<div class="bb" id="bbauto" style="left:1258.3px;top:1040.6px;color:#4bb4e6;letter-spacing:0.16px;">automatique</div>
<svg style="left:1391px;top:1042px" width="15" height="15" viewBox="-7.500 -7.500 15 15"><g stroke="#8c8c8c" stroke-width="1.300" fill="none"><circle r="3.400"/><path d="M0 -6.500V-4M0 4V6.500M-6.500 0H-4M4 0H6.500M-4.600 -4.600L-2.900 -2.900M2.900 2.900L4.600 4.600M-4.600 4.600L-2.900 2.900M2.900 -2.900L4.600 -4.600"/></g></svg>


<!-- left drawing toolbar -->
<div class="abs" style="left:17px;top:630px;width:52px;height:1px;background:#dbe6ef;"></div>
<div class="abs" style="left:17px;top:717px;width:52px;height:1px;background:#dbe6ef;"></div>
<div class="abs" style="left:17px;top:918px;width:52px;height:1px;background:#dbe6ef;"></div>
<div class="abs" style="left:22px;top:877px;width:42px;height:34px;background:#f0f3f6;border-radius:2px;"></div>
<div class="abs" style="left:71.5px;top:686px;width:4px;height:12px;border-radius:5px 0 0 5px;background:#d3d5db;"></div>
<svg id="ltools" style="left:0;top:0" width="75" height="1000" viewBox="0 0 75 1000">
<g fill="none" stroke="#5f6e80" stroke-width="1" stroke-linecap="round" stroke-linejoin="round">
<!-- crosshair -->
<path d="M31.900 341.400H39.900M47.100 341.400H54.800M43.500 329.900V337.700M43.500 344.900V352.800" stroke="#35a5e0" stroke-width="1.300" stroke-linecap="butt"/>
<!-- trend line -->
<circle cx="51.600" cy="370.400" r="2.200"/><circle cx="34.200" cy="387.500" r="2.200"/><path d="M35.800 385.900L50 372"/>
<!-- pitchfork -->
<circle cx="34.200" cy="414.500" r="2.100"/><circle cx="34.200" cy="425.500" r="2.100"/><circle cx="45.400" cy="425.500" r="2.100"/>
<path d="M35.700 413L42.500 406.500M35.700 424L48.300 411.600M46.900 424L53.600 417.400M35.700 416L43.900 424"/>
<!-- brush -->
<path d="M31.600 463.500C34 458 36.500 453.500 39.600 452.600C43.500 452 46.800 454.500 46.800 457.700C46.500 461.500 43.500 463.300 41.700 463.500Z"/>
<path d="M46.100 449C45.500 452 47.500 454 49.300 453.200L56.200 447.500"/>
<!-- text T -->
<path d="M37.100 486.600V484.500H50V486.600M43.500 484.500V501.300M41 501.300H46.400"/>
<!-- pattern -->
<circle cx="37.400" cy="522.200" r="2.100"/><circle cx="49.400" cy="523.300" r="2.100"/><circle cx="41.400" cy="529.400" r="2.100"/><circle cx="34.200" cy="539.600" r="2.100"/><circle cx="52.600" cy="536.400" r="2.100"/>
<path d="M36.900 524.300L34.700 537.500M38.400 524L40.400 527.500M40.200 531.100L35.400 537.900M43.100 528.200L47.700 524.500M49.900 525.400L52.100 534.300M43.300 530.300L50.700 535.300"/>
<!-- forecast -->
<circle cx="33.300" cy="560.600" r="2.100"/><circle cx="33.300" cy="571.400" r="2.100"/><circle cx="33.300" cy="578.400" r="2.100"/><circle cx="53.600" cy="571.400" r="2.100"/>
<path d="M35.400 560.600H54M35.400 571.400H51.500M35.400 578.400H54M43.500 564V575.500"/>
<path d="M41.600 565.300L43.500 562.600L45.400 565.300ZM41.600 574.200L43.500 576.900L45.400 574.200Z" fill="#5f6e80"/>
<!-- back arrow -->
<path d="M36.800 605.500L43.600 598.800M36.800 605.500L43.600 612.200M37.500 605.500H49.500" stroke="#6b7a8c" stroke-width="4.600"/>
<!-- ruler + candles -->
<path d="M32.100 650H36.300V662.300H55V666.500H32.100Z"/>
<path d="M32.100 653.500H34M32.100 656.500H34M32.100 659.500H34M40 666.500V664.500M44 666.500V664.500M48 666.500V664.500M52 666.500V664.500" stroke-width="0.800"/>
<rect x="40.700" y="648" width="3.800" height="7.700"/><path d="M42.600 644.800V648M42.600 655.700V658.200"/>
<rect x="48.300" y="650" width="3.800" height="6.600"/><path d="M50.200 647V650M50.200 656.600V660"/>
<!-- zoom -->
<circle cx="41.600" cy="692.400" r="8.400"/><path d="M38 692.400H45.200M41.600 688.800V696M47.600 698.500L51 701.900"/>
<!-- magnet -->
<path d="M35 750.200V740.500A8.050 8.200 0 0 1 51.100 740.500V750.200H46.400V740.500A3.350 3.500 0 0 0 39.700 740.500V750.200Z"/>
<path d="M35 746H39.700M46.400 746H51.100"/>
<!-- pencil + lock -->
<path d="M32.500 783.100L33.600 778.800L44.800 768.800L48.200 772.200L37 782.200ZM33.600 778.800L37 782.200M36 776.700L46.200 767.500M38.500 779.900L47.200 772"/>
<rect x="44.300" y="783.700" width="8.200" height="5.900" rx="0.800" fill="#fff"/><path d="M46.100 783.700V781.800A2.300 2.300 0 0 1 50.700 781.300"/><path d="M48.400 786V787.300" stroke-width="1.300"/>
<!-- unlock -->
<rect x="35.400" y="816" width="15.400" height="11.500" rx="1.800"/><path d="M39.700 813.200V812A3.400 3.800 0 0 1 46.500 812V816"/><path d="M43.100 821.700V823.300" stroke-width="1.500"/>
<!-- eye -->
<path d="M33.100 855.700C36 851 39.500 848.800 43 848.800C46.500 848.800 50 851 53 855.700C50 860.400 46.500 862.600 43 862.600C39.500 862.600 36 860.400 33.100 855.700Z"/><circle cx="43" cy="855.700" r="2.900" fill="#5f6e80"/>
<!-- link -->
<g stroke="#35a5e0" stroke-width="1.3" transform="translate(42.6 893.6) rotate(-45)" stroke-linecap="butt"><path d="M-1.8 -4.2H-4.5A4.2 4.2 0 0 0 -4.5 4.2H0.6"/><path d="M1.8 4.2H4.5A4.2 4.2 0 0 0 4.5 -4.2H-0.6"/><path d="M-3.9 0H3.9"/></g>
<!-- layers -->
<path d="M43 934L52.500 941L43 948L33.500 941Z"/><path d="M33.500 944.500L43 951.500L52.500 944.500M33.500 948L43 955L52.500 948"/>
<!-- trash -->
<path d="M35 974.800H50.200M40 974.800V973.300H45.500V974.800M36 975.500V989.500A2.200 2.200 0 0 0 38.200 991.700H47A2.200 2.200 0 0 0 49.200 989.500V975.500M39.700 979V988.500M42.600 979V988.500M45.500 979V988.500"/>
</g>
</svg>


<div class="t" id="promo" style="left:17px;top:1073.5px;font-size:18px;color:#222;">Promu par <span style="color:#1a5aa6">TradingView</span></div>

<!-- right panel -->
<div class="abs" style="left:1417px;top:0;width:25px;height:1104px;background:#fff;"></div>
<div class="abs" style="left:1415px;top:0;width:2px;height:1104px;background:#d9dce4;"></div>
<div class="abs" style="left:1435px;top:23px;width:7px;height:1px;background:#e3e5ea;"></div>
<div class="abs" style="left:1435px;top:30.500px;width:7px;height:1px;background:#7a7f8a;"></div>
<div class="abs" style="left:1435px;top:66px;width:7px;height:1px;background:#e3e5ea;"></div>
<div class="abs" style="left:1435px;top:110px;width:7px;height:1px;background:#e3e5ea;"></div>
<div class="abs" style="left:1437px;top:121px;width:5px;height:27px;background:#f3f6fb;"></div>
<div class="abs" style="left:1437px;top:121.500px;width:5px;height:1px;background:#6ea0dc;transform:rotate(-8deg);"></div>
<div class="t" style="left:1437.500px;top:128px;font-size:12px;color:#444;">C</div>
<div class="abs" style="left:1435px;top:149px;width:8px;height:35px;background:#e9f0fb;border-radius:3px 0 0 3px;"></div>
<div class="abs" style="left:1435px;top:219px;width:7px;height:1px;background:#e3e5ea;"></div>
<div class="abs" style="left:1435px;top:255px;width:7px;height:1px;background:#e3e5ea;"></div>
<div class="abs" style="left:1435px;top:291.500px;width:7px;height:1px;background:#e3e5ea;"></div>
<div class="abs" style="left:1435px;top:328px;width:7px;height:1px;background:#e3e5ea;"></div>
<div class="abs" style="left:1435px;top:364px;width:7px;height:1px;background:#e3e5ea;"></div>
<div class="abs" style="left:1435px;top:400px;width:7px;height:1px;background:#e3e5ea;"></div>


<!-- bottom strip -->
<div class="abs" style="left:0;top:1088px;width:1415px;height:10px;background:linear-gradient(180deg,rgba(0,0,0,0) 0%,rgba(0,0,0,.07) 100%);"></div>
<div class="abs" style="left:0;top:1097.7px;width:697px;height:6.3px;background:#a6a6a6;"></div>
<div class="abs" style="left:697px;top:1097.7px;width:745px;height:6.3px;background:#999;"></div>
<svg style="left:0;top:1097.7px" width="700" height="6.3" viewBox="0 0 700 6.3"><path d="M1.400 0H59.600Q52 6.300 45 9H16Q8 6.300 1.400 0Z" fill="#8fa3b8"/><path d="M631.400 0H646.700Q639 3.600 631.400 0Z" fill="#0b8a43"/></svg>
</body>
</html>
